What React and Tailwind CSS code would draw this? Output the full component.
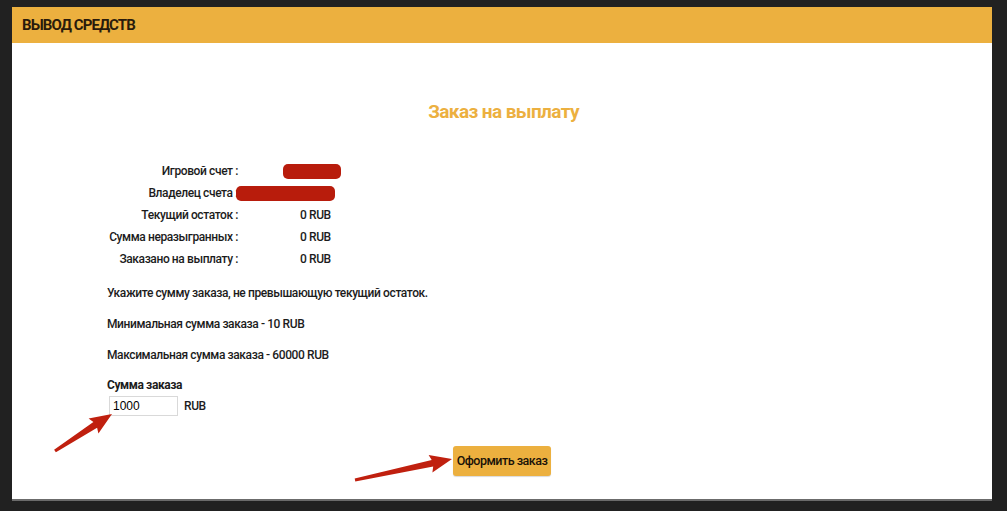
import React from 'react';

const rows = [
  { label: 'Игровой счет :', value: null, blob: 'ml-[45px] w-[58px]' },
  { label: 'Владелец счета :', value: null, blob: 'ml-[-2px] w-[99px]' },
  { label: 'Текущий остаток :', value: '0 RUB' },
  { label: 'Сумма неразыгранных :', value: '0 RUB' },
  { label: 'Заказано на выплату :', value: '0 RUB' },
];

// polygon for a hand-drawn annotation arrow, tail -> tip
function arrowPoints(tail, tip) {
  const [x1, y1] = tail;
  const [x2, y2] = tip;
  const dx = x2 - x1;
  const dy = y2 - y1;
  const len = Math.hypot(dx, dy);
  const ux = dx / len;
  const uy = dy / len;
  const nx = -uy;
  const ny = ux;
  const head = 20;
  const hw = 9;
  const sw = 3.4;
  const tw = 1.6;
  const bx = x2 - ux * head;
  const by = y2 - uy * head;
  const p = [
    [x1 + nx * tw, y1 + ny * tw],
    [bx + nx * sw, by + ny * sw],
    [bx + nx * hw - ux * 2, by + ny * hw - uy * 2],
    [x2, y2],
    [bx - nx * hw - ux * 2, by - ny * hw - uy * 2],
    [bx - nx * sw, by - ny * sw],
    [x1 - nx * tw, y1 - ny * tw],
  ];
  return p.map(([a, b]) => `${a.toFixed(1)},${b.toFixed(1)}`).join(' ');
}

export default function App() {
  return (
    <div className="relative w-full h-[511px] bg-[#212121] pt-[7px] pl-[12px] overflow-hidden font-['Roboto','Liberation_Sans',sans-serif]">
      <div className="w-[980px] h-[494px] bg-white border-b-2 border-[#6b6b6b] flex flex-col">
        {/* header */}
        <div className="h-[36px] bg-[#ecb03f] flex items-center pl-[10px]">
          <h1 className="text-[15px] font-bold text-[#2a1b0b] tracking-[-0.9px] uppercase">Вывод средств</h1>
        </div>

        <div className="flex flex-col">
          <h2 className="mt-[57px] text-center text-[19px] leading-[24px] font-bold text-[#ecb03f] tracking-[-0.6px] pl-[3px]">
            Заказ на выплату
          </h2>

          {/* account info */}
          <div className="mt-[36px] flex flex-col text-[12px] font-medium text-[#1c1c1c] tracking-[-0.4px]">
            {rows.map((r) => (
              <div key={r.label} className="h-[22px] flex items-center">
                <div className="w-[226px] text-right">{r.label}</div>
                {r.value ? (
                  <div className="pl-[62px]">{r.value}</div>
                ) : (
                  <span className={`block h-[15px] rounded-[5px] bg-[#b81c0c] ${r.blob}`} />
                )}
              </div>
            ))}
          </div>

          <div className="pl-[95px] text-[12px] font-medium text-[#1c1c1c] tracking-[-0.4px]">
            <p className="mt-[15px] leading-[16px]">Укажите сумму заказа, не превышающую текущий остаток.</p>
            <p className="mt-[15px] leading-[16px]">Минимальная сумма заказа - 10 RUB</p>
            <p className="mt-[15px] leading-[16px]">Максимальная сумма заказа - 60000 RUB</p>

            <div className="mt-[14px] font-bold leading-[16px]">Сумма заказа</div>
            <div className="mt-[3px] flex items-center gap-[6px] pl-[2px]">
              <input
                type="text"
                defaultValue="1000"
                className="w-[69px] h-[20px] border border-[#d9d9d9] px-[3px] text-[12px] font-normal text-black outline-none font-['Liberation_Sans',sans-serif] tracking-normal"
              />
              <span>RUB</span>
            </div>
          </div>

          <div className="mt-[30px] flex pl-[441px]">
            <button
              type="button"
              className="w-[98px] h-[30px] rounded-[3px] bg-[#ecb03f] text-[12.5px] font-medium text-[#1a1208] tracking-[-0.5px] shadow-[0_1px_1px_rgba(0,0,0,0.15)]"
            >
              Оформить заказ
            </button>
          </div>
        </div>
      </div>

      {/* annotation arrows */}
      <svg className="absolute inset-0 pointer-events-none" width="1007" height="511" viewBox="0 0 1007 511">
        <polygon points={arrowPoints([55, 451], [112, 414])} fill="#c0200f" />
        <polygon points={arrowPoints([355, 480], [452, 459])} fill="#c0200f" />
      </svg>
    </div>
  );
}
